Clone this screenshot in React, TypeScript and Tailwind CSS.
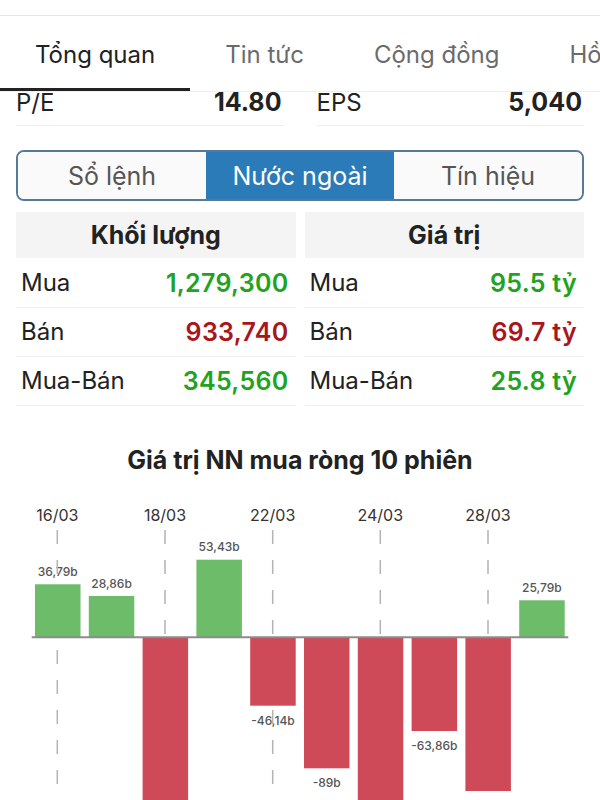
import React from "react";

const bars = [
  { v: 36.79, top: 584.3, bottom: 637, label: "36,79b" },
  { v: 28.86, top: 596, bottom: 637, label: "28,86b" },
  { v: -120, top: 638, bottom: 840, label: "" },
  { v: 53.43, top: 559.7, bottom: 637, label: "53,43b" },
  { v: -46.14, top: 638, bottom: 705.7, label: "-46,14b" },
  { v: -89, top: 638, bottom: 768.3, label: "-89b" },
  { v: -130, top: 638, bottom: 840, label: "" },
  { v: -63.86, top: 638, bottom: 731, label: "-63,86b" },
  { v: -106, top: 638, bottom: 791, label: "" },
  { v: 25.79, top: 600.3, bottom: 637, label: "25,79b" },
];

const dates = [
  { x: 57.3, t: "16/03" },
  { x: 165, t: "18/03" },
  { x: 272.7, t: "22/03" },
  { x: 380.3, t: "24/03" },
  { x: 488, t: "28/03" },
];

const OY = 490;

function Chart() {
  return (
    <svg width="600" height="310" viewBox="0 0 600 310" className="block">
      {dates.map((d) => (
        <text
          key={d.t}
          x={d.x}
          y={515 - OY}
          textAnchor="middle"
          dominantBaseline="central"
          fontSize="16"
          fill="#333"
          fontFamily="Inter, sans-serif"
        >
          {d.t}
        </text>
      ))}
      {bars.map((b, i) => {
        if (!b.label) return null;
        const cx = 35 + i * 53.8 + 22.75;
        const y = b.v > 0 ? b.top - 13 : b.bottom + 14.5;
        return (
          <text
            key={"l" + i}
            x={cx}
            y={y - OY}
            textAnchor="middle"
            dominantBaseline="central"
            fontSize="12"
            fontWeight="500"
            fill="#555"
            fontFamily="Inter, sans-serif"
          >
            {b.label}
          </text>
        );
      })}
      {dates.map((d) => (
        <line
          key={"d" + d.t}
          x1={d.x}
          x2={d.x}
          y1={530 - OY}
          y2={310}
          stroke="#b3b3b3"
          strokeWidth="1.5"
          strokeDasharray="14 16"
        />
      ))}
      {bars.map((b, i) => (
        <rect
          key={"b" + i}
          x={35 + i * 53.8}
          y={b.top - OY}
          width={45.5}
          height={b.bottom - b.top}
          fill={b.v > 0 ? "#6cbc69" : "#cf4a59"}
        />
      ))}
      <line x1="31.7" x2="568.3" y1={637.3 - OY} y2={637.3 - OY} stroke="#8c8c8c" strokeWidth="2" />
    </svg>
  );
}

function Row({
  label,
  value,
  color,
  h,
}: {
  label: string;
  value: string;
  color: string;
  h: string;
}) {
  return (
    <div className={`flex items-center justify-between border-b border-[#efefef] pl-[5px] pr-[7px] ${h}`}>
      <span className="text-[#222] text-[24px]">{label}</span>
      <span className={`font-semibold text-[25px] tracking-[0.3px] ${color}`}>{value}</span>
    </div>
  );
}

export default function App() {
  return (
    <div
      className="w-[600px] h-[800px] overflow-hidden bg-white text-[24px] leading-[28px]"
      style={{ fontFamily: "Inter, 'Noto Sans', sans-serif" }}
    >
      <div className="h-[16px] border-b border-[#e6e6e6]" />
      <div className="flex border-b border-[#eeeeee] whitespace-nowrap overflow-hidden">
        <div className="shrink-0 px-[35px] pt-[25px] pb-[19px] border-b-[3px] border-[#222] text-[#222]">Tổng quan</div>
        <div className="shrink-0 px-[35px] pt-[25px] pb-[19px] text-[#6b6b6b]">Tin tức</div>
        <div className="shrink-0 px-[35px] pt-[25px] pb-[19px] text-[#6b6b6b]">Cộng đồng</div>
        <div className="shrink-0 px-[35px] pt-[25px] pb-[19px] text-[#6b6b6b]">Hồ sơ</div>
      </div>
      <div className="flex gap-[33px] px-[16px]">
        <div className="flex-1 h-[34px] flex justify-between items-start border-b border-[#eeeeee] leading-[21px] pr-[2px]">
          <span className="text-[#222]">P/E</span>
          <span className="font-bold text-[25px] text-[#222]">14.80</span>
        </div>
        <div className="flex-1 h-[34px] flex justify-between items-start border-b border-[#eeeeee] leading-[21px] pr-[2px]">
          <span className="text-[#222]">EPS</span>
          <span className="font-bold text-[25px] text-[#222]">5,040</span>
        </div>
      </div>

      <div className="mx-[16px] mt-[24px] h-[51px] grid grid-cols-3 rounded-[8px] border-2 border-[#577a9a] overflow-hidden text-[25px]">
        <div className="flex items-center justify-center bg-[#fafafa] text-[#555]">Sổ lệnh</div>
        <div className="flex items-center justify-center bg-[#2b7bb9] text-white">Nước ngoài</div>
        <div className="flex items-center justify-center bg-[#fafafa] text-[#555]">Tín hiệu</div>
      </div>

      <div className="mx-[16px] mt-[11px] grid grid-cols-2 gap-[9px]">
        <div>
          <div className="h-[46px] flex items-center justify-center bg-[#f4f4f4] font-bold text-[25px] text-[#222]">Khối lượng</div>
          <Row label="Mua" value="1,279,300" color="text-[#21a321]" h="h-[50px]" />
          <Row label="Bán" value="933,740" color="text-[#a8161c]" h="h-[49px]" />
          <Row label="Mua-Bán" value="345,560" color="text-[#21a321]" h="h-[49px]" />
        </div>
        <div>
          <div className="h-[46px] flex items-center justify-center bg-[#f4f4f4] font-bold text-[25px] text-[#222]">Giá trị</div>
          <Row label="Mua" value="95.5 tỷ" color="text-[#21a321]" h="h-[50px]" />
          <Row label="Bán" value="69.7 tỷ" color="text-[#a8161c]" h="h-[49px]" />
          <Row label="Mua-Bán" value="25.8 tỷ" color="text-[#21a321]" h="h-[49px]" />
        </div>
      </div>

      <div className="mt-[40px] text-center font-bold text-[25px] leading-[28px] text-[#222]">
        Giá trị NN mua ròng 10 phiên
      </div>
      <div className="mt-[16px]">
        <Chart />
      </div>
    </div>
  );
}
